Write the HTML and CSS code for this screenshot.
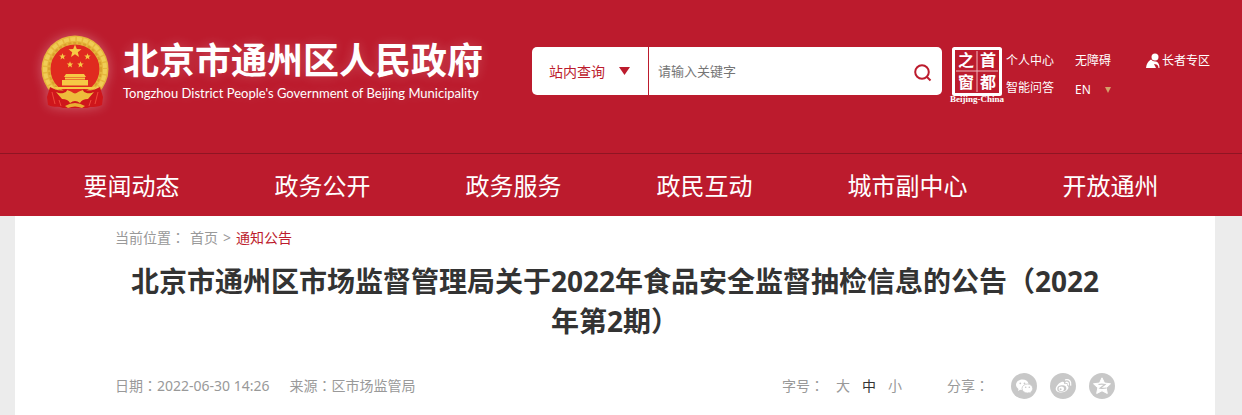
FILE: index.html
```html
<!DOCTYPE html>
<html lang="zh-CN">
<head>
    <meta charset="UTF-8">
    <meta name="viewport" content="width=device-width, initial-scale=1.0">
    <title>北京市通州区人民政府</title>
    <link rel="stylesheet" href="styles.css">
</head>
<body>

    <!-- 页头 -->
    <header class="header">
        <a class="logo" href="#">
            <svg class="emblem" viewBox="0 0 70 76" aria-hidden="true">
                <path d="M14 54 L9 62 L11 70 L20 68 L24 73 L35 70 L46 73 L50 68 L59 70 L61 62 L56 54 Z" fill="#c8141c"/>
                <circle cx="35" cy="34" r="33.500" fill="#e6b63c"/>
                <circle cx="35" cy="34" r="30" fill="none" stroke="#f0cc55" stroke-width="4" stroke-dasharray="5 1.500"/>
                <circle cx="35" cy="34" r="26" fill="none" stroke="#d9a02c" stroke-width="2" stroke-dasharray="3 2"/>
                <circle cx="35" cy="34" r="24.500" fill="#e02a1f"/>
                <g fill="#f6c945">
                    <path id="star" d="M35 9.500 L36.800 14 L41.500 14.200 L37.800 17.200 L39 22 L35 19.200 L31 22 L32.200 17.200 L28.500 14.200 L33.200 14 Z"/>
                    <use href="#star" transform="translate(5 13.500) scale(.5)"/>
                    <use href="#star" transform="translate(30 13.500) scale(.5)"/>
                    <use href="#star" transform="translate(12.500 21.500) scale(.5)"/>
                    <use href="#star" transform="translate(23 21.500) scale(.5)"/>
                    <path d="M26 39 h18 l2 3 h-22 z M25 42.500 h20 v2 h-20 z M22 45 h26 v5.500 h-26 z"/>
                    <path d="M14 52 h42 l-2 2 h-38 z"/>
                </g>
                <path d="M10 52 C15 55 22 57 26 54 L35 61 L44 54 C48 57 55 55 60 52 L63 62 L62 70 C55 73 51 71 47 73 H23 C19 71 15 73 8 70 L7 62 Z" fill="#cf161b"/>
                <path d="M16 57 C22 60 27 57 27 55 Q31 56 35 59 Q39 56 43 55 C43 57 48 60 54 57 L48 64 Q42 64 40 68 Q35 64 30 68 Q28 64 22 64 Z" fill="#eebc3b"/>
                <path d="M25 71 Q35 65 45 71 L42 73 Q35 70 28 73 Z" fill="#e9ae32"/>
                <path d="M12 57 L15 69 M58 57 L55 69 M19 65 L21 71 M51 65 L49 71" stroke="#f04a3c" fill="none"/>
            </svg>
            <span class="site">
                <strong>北京市通州区人民政府</strong>
                <span lang="en">Tongzhou District People's Government of Beijing Municipality</span>
            </span>
        </a>

        <form class="search">
            <div class="scope">
                <select aria-label="查询范围">
                    <option>站内查询</option>
                </select>
                <svg viewBox="0 0 11 8" aria-hidden="true"><path d="M0 0 H11 L5.500 8 Z"/></svg>
            </div>
            <input type="text" placeholder="请输入关键字" aria-label="关键字">
            <button type="submit" aria-label="搜索">
                <svg viewBox="0 0 18 18" aria-hidden="true"><circle cx="8" cy="8" r="6.800"/><path d="M12.500 12.500 L16.500 16.500"/></svg>
            </button>
        </form>

        <div class="tools">
            <a class="seal" href="#" aria-label="首都之窗">
                <svg viewBox="0 0 56 58">
                    <rect x="4.500" y="2.500" width="47" height="46" rx="1" fill="none" stroke="#fff" stroke-width="3"/>
                    <path d="M28 5 V46 M7 25 H49" stroke="#f0b9bf" stroke-width="1" fill="none"/>
                    <g class="seal-cn">
                        <text x="17" y="20">之</text>
                        <text x="39" y="20">首</text>
                        <text x="17" y="42">窗</text>
                        <text x="39" y="42">都</text>
                    </g>
                    <text class="seal-en" x="28" y="56">Beijing-China</text>
                </svg>
            </a>
            <div class="links">
                <a href="#">个人中心</a>
                <a href="#">智能问答</a>
            </div>
            <div class="links access">
                <a href="#">无障碍</a>
                <a class="lang" href="#">EN
                    <svg viewBox="0 0 6 6" aria-hidden="true"><path d="M0 0 H6 L3 6 Z"/></svg>
                </a>
            </div>
            <div class="links">
                <a class="elder" href="#">
                    <svg viewBox="0 0 14 16" aria-hidden="true">
                        <circle cx="9" cy="4" r="3.500"/>
                        <path d="M5 6.500 Q7 9 10 8.500 Q13.500 9.500 13.500 15 H12.500 Q12.500 12 10.500 11.500 L8 11 L10 15 H0 Q0.500 9 5 6.500 Z"/>
                    </svg>长者专区</a>
            </div>
        </div>
    </header>

    <!-- 主导航 -->
    <nav class="nav">
        <a href="#">要闻动态</a>
        <a href="#">政务公开</a>
        <a href="#">政务服务</a>
        <a href="#">政民互动</a>
        <a href="#">城市副中心</a>
        <a href="#">开放通州</a>
    </nav>

    <!-- 正文 -->
    <main class="article">
        <div class="crumbs">
            <span>当前位置<span class="mark" lang="zh-TW">：</span></span>
            <a href="#">首页</a>
            <span>&gt;</span>
            <a class="current" href="#">通知公告</a>
        </div>

        <h1>北京市通州区市场监督管理局关于2022年食品安全监督抽检信息的公告（2022年第2期）</h1>

        <div class="meta">
            <span>日期<span class="mark" lang="zh-TW">：</span>2022-06-30 14:26</span>
            <span>来源<span class="mark" lang="zh-TW">：</span>区市场监管局</span>
            <div class="sizes">
                <span>字号<span class="mark" lang="zh-TW">：</span></span>
                <button type="button">大</button>
                <button type="button" class="active">中</button>
                <button type="button">小</button>
            </div>
            <div class="share">
                <span class="share-label">分享<span class="mark" lang="zh-TW">：</span></span>
                <a href="#" aria-label="微信">
                    <svg viewBox="0 0 26 26">
                        <circle cx="13" cy="13" r="13" fill="#c8c8c8"/>
                        <path d="M11.500 6.500 C7.800 6.500 5 8.800 5 11.800 C5 13.500 6 15 7.500 16 L7 18 L9.300 16.800 L11.500 17 C17 17 18 13 17.500 10.500 C16.800 8 14.500 6.500 11.500 6.500 Z" fill="#fff"/>
                        <path d="M16.500 11 C13.500 11 11 13 11 15.500 C11 18 13.500 20 16.500 20 L18.300 19.700 L20.200 20.800 L19.700 19 C21 18.200 21.700 17 21.700 15.500 C21.700 13 19.500 11 16.500 11 Z" fill="#fff" stroke="#c8c8c8" stroke-width=".8"/>
                        <g fill="#c8c8c8"><circle cx="9.300" cy="10.300" r=".9"/><circle cx="13.500" cy="10.300" r=".9"/><circle cx="14.700" cy="14.200" r=".8"/><circle cx="18.300" cy="14.200" r=".8"/></g>
                    </svg>
                </a>
                <a href="#" aria-label="微博">
                    <svg viewBox="0 0 26 26">
                        <circle cx="13" cy="13" r="13" fill="#c8c8c8"/>
                        <path d="M11.500 9 C14 8 14.500 9.500 14 11 C17 10 17.800 11.300 17 12.800 C19 13.300 19 15.500 17 17.300 C13 21 5.500 19.800 5.700 15.800 C6 13 9 9.800 11.500 9 Z" fill="#fff"/>
                        <ellipse cx="11.800" cy="15.500" rx="4.600" ry="3.200" fill="#c8c8c8" transform="rotate(-8 12 15.500)"/>
                        <ellipse cx="11.300" cy="15.700" rx="2.700" ry="2.300" fill="#fff"/>
                        <circle cx="10.600" cy="16.200" r="1" fill="#c8c8c8"/>
                        <path d="M15.500 6.800 C19 6 21.500 8.500 20.700 12.200 M16 9.300 C17.700 9 18.700 10 18.300 11.800" fill="none" stroke="#fff" stroke-width="1.300" stroke-linecap="round"/>
                    </svg>
                </a>
                <a href="#" aria-label="QQ空间">
                    <svg viewBox="0 0 26 26">
                        <circle cx="13" cy="13" r="13" fill="#c8c8c8"/>
                        <path d="M13 4.800 L15.500 10 L21.500 10.800 L17.200 14.800 L18.300 20.500 L13 17.800 L7.700 20.500 L8.800 14.800 L4.500 10.800 L10.500 10 Z" fill="#fff" stroke="#fff" stroke-linejoin="round"/>
                        <path d="M9.500 11.500 Q13 10.800 16 11.500 L11 15.200 Q14 15.800 17.500 15" fill="none" stroke="#c8c8c8" stroke-width="1.200"/>
                    </svg>
                </a>
            </div>
        </div>
    </main>

</body>
</html>
```

FILE: styles.css
```css
* {
    box-sizing: border-box;
}

body {
    margin: 0;
    background-color: #ececec;
    color: #333;
    font-family: "Noto Sans", "Noto Sans CJK SC", sans-serif;
    font-size: 14px;
    line-height: 20px;
}

a {
    color: inherit;
    text-decoration: none;
}

svg {
    display: block;
}

button, input, select {
    font-family: inherit;
    border: 0;
    padding: 0;
    background: none;
    outline: none;
}

/* 居中的全角标点 */
.mark {
    font-family: "Noto Sans CJK TC", sans-serif;
    line-height: 1;
}

/* 页头 */
.header {
    display: flex;
    align-items: flex-start;
    min-height: 153px;
    padding: 35px 32px 40px 40px;
    background-color: #bc1b2d;
    color: #fff;
}

.logo {
    display: flex;
    gap: 13px;
    width: 492px;
    flex-shrink: 0;
}

.emblem {
    width: 70px;
    height: 76px;
    filter: drop-shadow(0 0 6px rgba(255, 255, 255, 0.3));
}

.site {
    display: flex;
    flex-direction: column;
    padding-top: 6px;
    white-space: nowrap;
    text-shadow: 0 0 12px rgba(255, 255, 255, 0.2);
}

.site strong {
    font-size: 36px;
    line-height: 40px;
}

.site span {
    font-family: Lato, sans-serif;
    font-size: 13px;
    line-height: 24px;
}

/* 搜索框 */
.search {
    display: flex;
    flex: 1;
    height: 48px;
    margin-top: 12px;
    border-radius: 5px;
    background-color: #fff;
    color: #bc1b2d;
}

.scope {
    display: flex;
    align-items: center;
    gap: 14px;
    width: 117px;
    padding-left: 17px;
    border-right: 1px solid #bc1b2d;
}

.scope select {
    appearance: none;
    width: 56px;
    color: #bc1b2d;
    font-size: 14px;
}

.scope svg {
    width: 11px;
    height: 8px;
    fill: #bc1b2d;
}

.search input {
    flex: 1;
    min-width: 0;
    padding-left: 9px;
    font-size: 13px;
}

.search input::placeholder {
    color: #757575;
}

.search button {
    padding: 4px 10px 0;
}

.search button svg {
    width: 18px;
    height: 18px;
    fill: none;
    stroke: #bc1b2d;
    stroke-width: 2;
}

/* 右侧工具 */
.tools {
    display: flex;
    padding-top: 11px;
    font-size: 12px;
    white-space: nowrap;
}

.seal {
    margin-left: 7px;
}

.seal svg {
    width: 56px;
    height: 58px;
    fill: #fff;
    text-anchor: middle;
}

.seal-cn {
    font-size: 16px;
    font-weight: bold;
}

.seal-en {
    font-family: "Liberation Serif", serif;
    font-size: 9px;
    font-weight: bold;
}

.links {
    display: flex;
    flex-direction: column;
    gap: 7px;
    padding-top: 5px;
    margin-left: 1px;
}

.access {
    gap: 9px;
    margin: 0 34px 0 21px;
}

.lang {
    display: flex;
    align-items: center;
    gap: 14px;
}

.lang svg {
    width: 6px;
    height: 6px;
    fill: #d3a06a;
}

.elder {
    display: flex;
    align-items: center;
    gap: 2px;
}

.elder svg {
    width: 14px;
    height: 16px;
    fill: #fff;
}

/* 主导航 */
.nav {
    display: flex;
    justify-content: center;
    gap: 95px;
    padding-top: 2px;
    border-top: 1px solid #8f1523;
    background-color: #bc1b2d;
    color: #fff;
    font-size: 24px;
    line-height: 60px;
    white-space: nowrap;
}

/* 正文 */
.article {
    max-width: 1200px;
    min-height: calc(100vh - 216px);
    margin-left: 15px;
    padding: 12px 100px;
    background-color: #fff;
}

.crumbs, .meta {
    display: flex;
    color: #999;
}

.crumbs {
    gap: 5px;
}

.crumbs .current {
    color: #bc1b2d;
}

h1 {
    margin: 13px 0 32px;
    padding: 0 8px;
    font-size: 28px;
    line-height: 40px;
    text-align: center;
}

.meta {
    align-items: center;
    gap: 20px;
}

.sizes {
    display: flex;
    gap: 12px;
    margin-left: auto;
}

.sizes button {
    color: #999;
    font-size: 14px;
    line-height: 20px;
}

.sizes .active {
    color: #333;
}

.share {
    display: flex;
    align-items: center;
    gap: 13px;
    margin-left: 25px;
}

.share-label {
    margin-right: 9px;
}

.share svg {
    width: 26px;
    height: 26px;
}
```
